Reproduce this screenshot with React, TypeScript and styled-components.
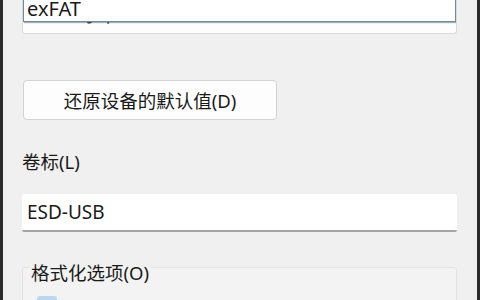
import styled, { createGlobalStyle } from 'styled-components';

const GlobalStyle = createGlobalStyle`
  html, body {
    margin: 0;
    padding: 0;
    background: #f0f0f0;
  }
  * {
    box-sizing: border-box;
  }
`;

const font = `"Noto Sans", "Noto Sans CJK SC", sans-serif`;

const Window = styled.div`
  width: 480px;
  height: 300px;
  overflow: hidden;
  display: flex;
  flex-direction: column;
  background: #f0f0f0;
  border-left: 3px solid #2b2b2b;
  border-right: 3px solid #2b2b2b;
  padding: 0 20px 0 19px;
  font-family: ${font};
  color: #1a1a1a;

  & > * {
    flex-shrink: 0;
  }
`;

const Combo = styled.div`
  position: relative;
  height: 34px;
  background: #fdfdfd;
  border: 1px solid #dadada;
  border-top: none;
  border-radius: 0 0 3px 3px;
  padding: 0 10px;
  font-size: 19px;
  line-height: 34px;
  overflow: hidden;
`;

const ComboValue = styled.span`
  display: block;
  margin-top: -2px;
  color: #333;
`;

const DropList = styled.div`
  position: absolute;
  top: 0;
  left: 0;
  right: 0;
  height: 22px;
  background: #ffffff;
  border: 1px solid #6e8c9b;
  border-top: none;
  box-shadow: 1px 1px 1px rgba(60, 80, 90, 0.45);
  overflow: hidden;
`;

const DropItem = styled.div`
  padding-left: 3px;
  font-size: 20px;
  line-height: 18px;
  color: #1a1a1a;
`;

const ResetButton = styled.button`
  margin-top: 46px;
  width: 254px;
  height: 40px;
  margin-left: 1px;
  background: #fdfdfd;
  border: 1px solid #d3d3d3;
  border-radius: 4px;
  font-family: ${font};
  font-size: 18.5px;
  color: #1a1a1a;
  padding: 0;
`;

const FieldLabel = styled.div`
  margin-top: 29px;
  font-size: 18.5px;
  line-height: 26px;
  color: #1a1a1a;
`;

const TextBox = styled.div`
  margin-top: 19px;
  height: 38px;
  background: #ffffff;
  border-bottom: 2px solid #a5a5a5;
  border-radius: 2px;
  padding-left: 5px;
  font-size: 19px;
  line-height: 36px;
  color: #1a1a1a;
`;

const Group = styled.fieldset`
  margin: 18px 0 0 0;
  padding: 4px 14px 0;
  border: 1px solid #e2e2e2;
  border-radius: 3px;
  background: #f3f3f3;
  min-height: 80px;
`;

const Legend = styled.legend`
  margin-left: -8px;
  padding: 12px 2px 0;
  font-size: 18.5px;
  line-height: 22px;
  color: #1a1a1a;
`;

const CheckBox = styled.div`
  margin-top: 8px;
  width: 20px;
  height: 20px;
  border-radius: 3px;
  background: #bcd6f0;
`;

export default function App() {
  return (
    <>
      <GlobalStyle />
      <Window>
        <Combo>
          <ComboValue>4096 字节</ComboValue>
          <DropList>
            <DropItem>exFAT</DropItem>
          </DropList>
        </Combo>
        <ResetButton>还原设备的默认值(D)</ResetButton>
        <FieldLabel>卷标(L)</FieldLabel>
        <TextBox>ESD-USB</TextBox>
        <Group>
          <Legend>格式化选项(O)</Legend>
          <CheckBox />
        </Group>
      </Window>
    </>
  );
}
